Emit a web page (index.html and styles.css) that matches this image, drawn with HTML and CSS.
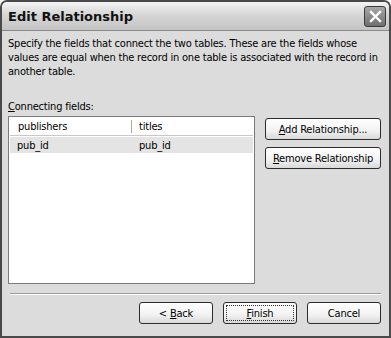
FILE: index.html
```html
<!DOCTYPE html>
<html lang="en">

<head>
    <meta charset="UTF-8">
    <title>Edit Relationship</title>
    <link rel="stylesheet" href="styles.css">
</head>

<body>
    <div class="window">
        <div class="titlebar">
            <span class="title">Edit Relationship</span>
            <span class="close">
                <svg width="15" height="15" viewBox="0 0 15 15">
                    <path d="M3 3 L12 12 M12 3 L3 12" stroke="#fff" stroke-width="2.4" stroke-linecap="square" />
                </svg>
            </span>
        </div>
        <div class="content">
            <p class="desc">Specify the fields that connect the two tables. These are the fields whose values are equal when the record in one table is associated with the record in another table.</p>
            <div class="label"><u>C</u>onnecting fields:</div>
            <div class="fields">
                <div class="list">
                    <div class="list-head">
                        <div class="col col-a">publishers</div>
                        <div class="col col-b">titles</div>
                    </div>
                    <div class="list-row">
                        <div class="col col-a">pub_id</div>
                        <div class="col col-b">pub_id</div>
                    </div>
                </div>
                <div class="side">
                    <button class="btn btn-wide"><u>A</u>dd Relationship...</button>
                    <button class="btn btn-wide"><u>R</u>emove Relationship</button>
                </div>
            </div>
            <div class="separator"></div>
            <div class="footer">
                <button class="btn">&lt; <u>B</u>ack</button>
                <button class="btn btn-default"><u>F</u>inish</button>
                <button class="btn">Cancel</button>
            </div>
        </div>
    </div>
</body>

</html>
```

FILE: styles.css
```css
* {
    box-sizing: border-box;
}

body {
    margin: 0;
    background: #fff;
    font-family: "DejaVu Sans Condensed", "DejaVu Sans", sans-serif;
    font-size: 11px;
    letter-spacing: -0.2px;
    color: #000;
}

u {
    text-decoration: underline;
    text-underline-offset: 1px;
}

.window {
    width: 391px;
    height: 338px;
    border: 2px solid #4a4a4a;
    border-radius: 7px 7px 0 0;
    background: #dcdcdc;
    display: flex;
    flex-direction: column;
    overflow: hidden;
}

.titlebar {
    height: 29px;
    display: flex;
    align-items: center;
    justify-content: space-between;
    padding: 0 3px 0 6px;
    background: linear-gradient(#f4f4f4 0%, #d6d6d6 45%, #c4c4c4 100%);
    border-bottom: 1px solid #8a8a8a;
}

.title {
    font-family: "DejaVu Sans", sans-serif;
    font-weight: bold;
    font-size: 13px;
    letter-spacing: 0;
    color: #111;
}

.close {
    width: 22px;
    height: 21px;
    border: 1px solid #3c3c3c;
    border-radius: 3px;
    background: linear-gradient(#a8a8a8, #6e6e6e);
    display: flex;
    align-items: center;
    justify-content: center;
}

.content {
    flex: 1;
    padding: 6px 6px 0 6px;
    display: flex;
    flex-direction: column;
}

.desc {
    margin: 0;
    line-height: 14px;
}

.label {
    margin-top: 21px;
    line-height: 14px;
}

.fields {
    display: flex;
    gap: 10px;
    margin-top: 2px;
}

.list {
    width: 247px;
    height: 168px;
    background: #fff;
    border: 1px solid #7a7a7a;
    padding: 1px;
}

.list-head {
    display: flex;
    height: 18px;
    align-items: center;
    border-bottom: 1px solid #c8c8c8;
}

.list-head .col-a {
    border-right: 1px solid #aaa;
    height: 13px;
    line-height: 13px;
}

.list-row {
    display: flex;
    height: 16px;
    align-items: center;
    background: #e4e4e4;
    margin-top: 1px;
}

.col-a {
    width: 122px;
    padding-left: 7px;
}

.col-b {
    padding-left: 7px;
}

.list-head .col-a {
    padding-left: 8px;
}

.side {
    display: flex;
    flex-direction: column;
    gap: 7px;
    padding-top: 2px;
}

.btn {
    width: 74px;
    height: 22px;
    font-family: inherit;
    font-size: 11px;
    letter-spacing: inherit;
    color: #000;
    background: linear-gradient(#ffffff 0%, #f2f2f2 60%, #d8d8d8 100%);
    border: 1px solid #2c2c2c;
    border-radius: 3px;
    padding: 0;
}

.btn-wide {
    width: 116px;
}

.btn-default {
    outline: 1px dotted #333;
    outline-offset: -4px;
}

.separator {
    margin-top: 9px;
    margin-left: 2px;
    margin-right: 2px;
    height: 2px;
    border-top: 1px solid #9a9a9a;
    border-bottom: 1px solid #fff;
}

.footer {
    display: flex;
    justify-content: flex-end;
    gap: 10px;
    margin-top: 7px;
    padding-right: 2px;
}
```
